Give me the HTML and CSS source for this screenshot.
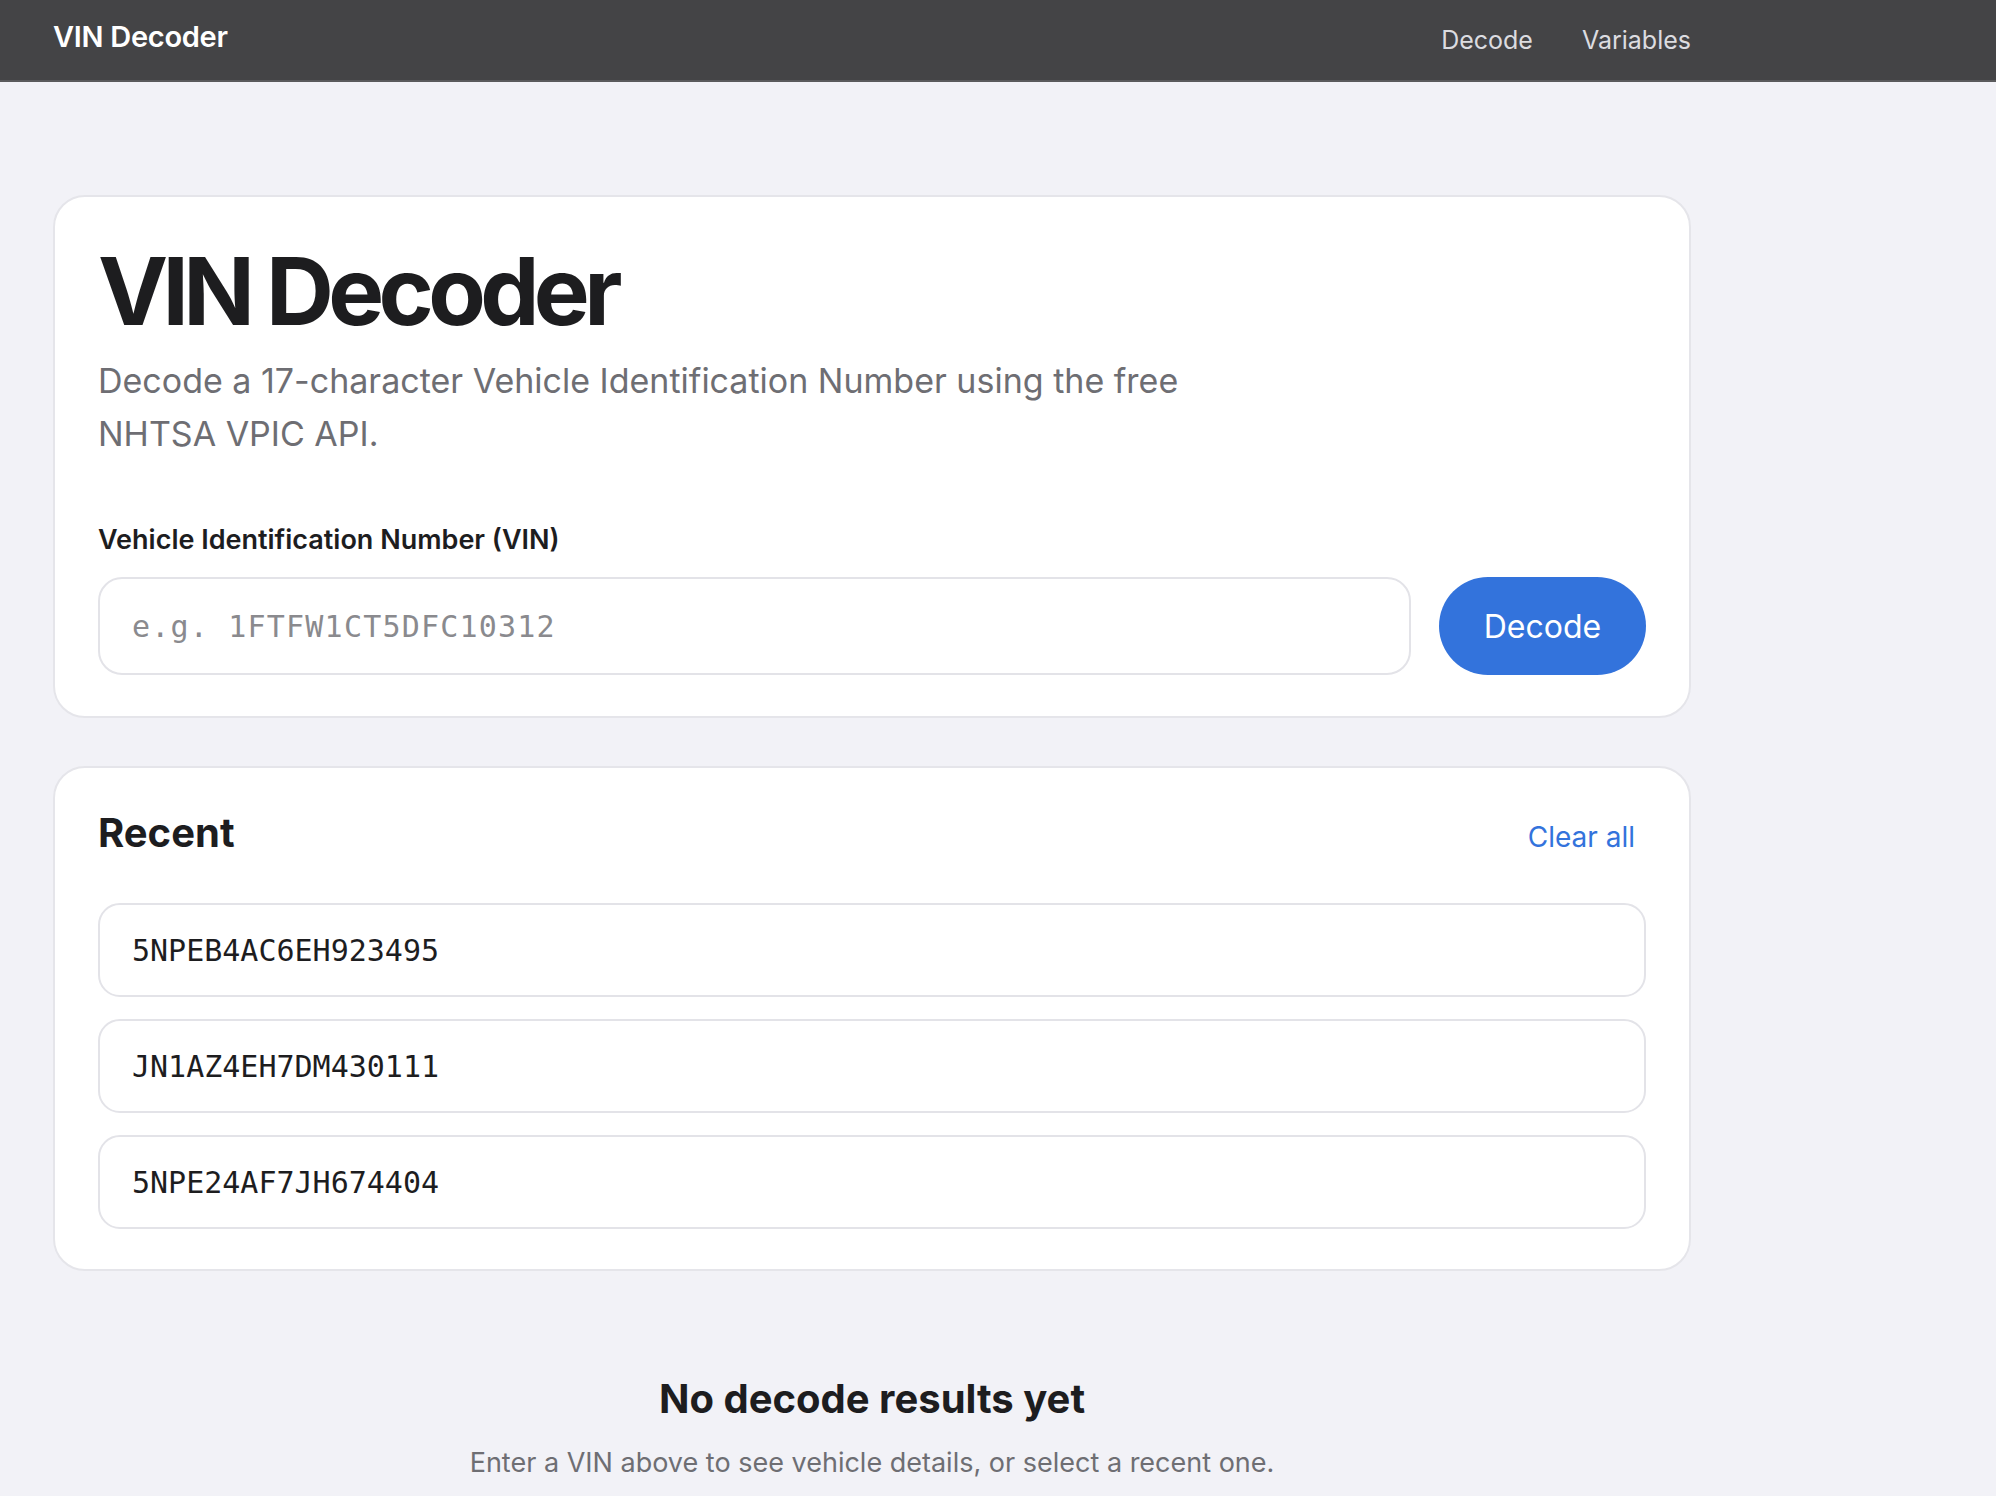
FILE: index.html
```html
<!doctype html>
<html>

<head>
  <meta name="viewport" content="width=device-width, initial-scale=1.0">
  <title>VIN Decoder</title>
  <link rel="stylesheet" href="styles.css">
</head>

<body>

  <header class="topbar">
    <div class="container topbar-inner">
      <a class="brand" href="#">VIN Decoder</a>
      <nav class="nav-links">
        <a href="#">Decode</a>
        <a href="#">Variables</a>
      </nav>
    </div>
  </header>

  <main class="container page">

    <section class="card hero">
      <h1>VIN Decoder</h1>
      <p class="lead">Decode a 17-character Vehicle Identification Number using the free NHTSA VPIC API.</p>

      <label class="field-label" for="vin">Vehicle Identification Number (VIN)</label>
      <div class="vin-row">
        <input id="vin" autocomplete="off" placeholder="e.g. 1FTFW1CT5DFC10312" />
        <button class="btn-primary">Decode</button>
      </div>
    </section>

    <section class="card recent">
      <div class="recent-head">
        <h2>Recent</h2>
        <button class="link-btn">Clear all</button>
      </div>
      <ul class="recent-list">
        <li><button class="recent-item">5NPEB4AC6EH923495</button></li>
        <li><button class="recent-item">JN1AZ4EH7DM430111</button></li>
        <li><button class="recent-item">5NPE24AF7JH674404</button></li>
      </ul>
    </section>

    <div class="empty-state">
      <h3>No decode results yet</h3>
      <p>Enter a VIN above to see vehicle details, or select a recent one.</p>
    </div>

  </main>

</body>

</html>
```

FILE: styles.css
```css
* {
  margin: 0;
  padding: 0;
  box-sizing: border-box;
}

body {
  font-family: Inter, "Noto Sans", sans-serif;
  background: #f2f2f7;
  color: #1d1d1f;
}

.container {
  width: 1744px;
  padding: 0 53px;
}

/* top bar */

.topbar {
  background: #444446;
  border-bottom: 2px solid #5a5a5c;
}

.topbar-inner {
  height: 80px;
  padding-bottom: 8px;
  display: flex;
  align-items: center;
  justify-content: space-between;
}

.brand {
  color: #fff;
  font-size: 29px;
  font-weight: 600;
  text-decoration: none;
  letter-spacing: -0.01em;
}

.nav-links {
  display: flex;
  gap: 49px;
  padding-top: 7px;
}

.nav-links a {
  color: #dcdce0;
  font-size: 25px;
  text-decoration: none;
}

/* cards */

.page {
  padding-top: 113px;
}

.card {
  background: #fff;
  border: 2px solid #e5e5ea;
  border-radius: 32px;
  padding: 43px 43px 41px;
}

.hero h1 {
  font-size: 94px;
  line-height: 1.1;
  font-weight: 700;
  letter-spacing: -0.06em;
}

.lead {
  margin-top: 11px;
  max-width: 1110px;
  font-size: 34px;
  line-height: 53px;
  color: #6e6e73;
}

.field-label {
  display: block;
  margin-top: 62px;
  font-size: 27px;
  line-height: 1.3;
  font-weight: 600;
}

.vin-row {
  display: flex;
  gap: 28px;
  margin-top: 20px;
}

.vin-row input {
  flex: 1;
  height: 98px;
  border: 2px solid #e3e3e8;
  border-radius: 24px;
  padding: 0 32px;
  font: 30px "DejaVu Sans Mono", monospace;
  letter-spacing: 0.04em;
  color: #1d1d1f;
  outline: none;
}

.vin-row input::placeholder {
  color: #8a8a8e;
}

.btn-primary {
  width: 207px;
  height: 98px;
  border: none;
  border-radius: 49px;
  background: #3373dc;
  color: #fff;
  font: 32px Inter, sans-serif;
}

.recent {
  margin-top: 48px;
  padding: 40px 43px;
}

.recent-head {
  display: flex;
  align-items: baseline;
  justify-content: space-between;
  margin-bottom: 46px;
  padding-top: 1px;
}

.recent-head h2 {
  font-size: 40px;
  line-height: 1.2;
  font-weight: 700;
}

.link-btn {
  background: none;
  border: none;
  margin-right: 11px;
  color: #3373dc;
  font: 28px Inter, sans-serif;
}

.recent-list {
  list-style-type: none;
  display: flex;
  flex-direction: column;
  gap: 22px;
}

.recent-item {
  display: flex;
  align-items: center;
  width: 100%;
  height: 94px;
  padding: 0 32px;
  background: #fff;
  border: 2px solid #e3e3e8;
  border-radius: 22px;
  font: 30px "DejaVu Sans Mono", monospace;
  color: #1d1d1f;
  text-align: left;
}

/* empty state */

.empty-state {
  margin-top: 105px;
  text-align: center;
}

.empty-state h3 {
  font-size: 40px;
  line-height: 1.15;
  font-weight: 700;
}

.empty-state p {
  margin-top: 22px;
  font-size: 27px;
  line-height: 1.4;
  color: #6e6e73;
}
```
